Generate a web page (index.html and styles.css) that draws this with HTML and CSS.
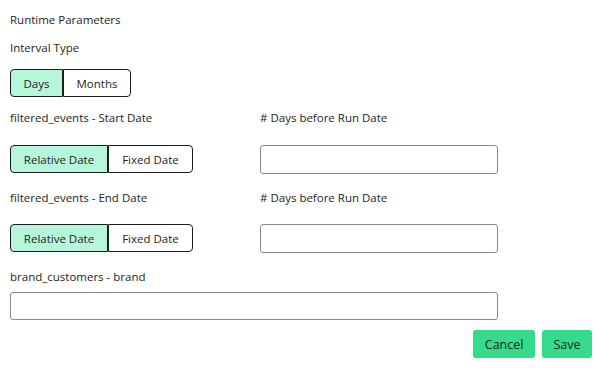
FILE: index.html
```html
<!DOCTYPE html>
<html lang="en">
<head>
    <meta charset="UTF-8">
    <title>Runtime Parameters</title>
    <link rel="stylesheet" href="styles.css">
</head>
<body>
    <div class="params">
        <div class="title">Runtime Parameters</div>

        <div class="field interval">
            <div class="label">Interval Type</div>
            <div class="toggle">
                <button class="active">Days</button>
                <button>Months</button>
            </div>
        </div>

        <div class="row start-row">
            <div class="field">
                <div class="label">filtered_events - Start Date</div>
                <div class="toggle date-toggle">
                    <button class="active wide">Relative Date</button>
                    <button>Fixed Date</button>
                </div>
            </div>
            <div class="field">
                <div class="label">#&nbsp;Days before Run Date</div>
                <input class="text-input" type="text">
            </div>
        </div>

        <div class="row end-row">
            <div class="field">
                <div class="label">filtered_events - End Date</div>
                <div class="toggle date-toggle">
                    <button class="active wide">Relative Date</button>
                    <button>Fixed Date</button>
                </div>
            </div>
            <div class="field">
                <div class="label">#&nbsp;Days before Run Date</div>
                <input class="text-input" type="text">
            </div>
        </div>

        <div class="field brand">
            <div class="label">brand_customers - brand</div>
            <input class="text-input full" type="text">
        </div>

        <!-- Footer actions -->
        <div class="actions">
            <button class="btn">Cancel</button>
            <button class="btn">Save</button>
        </div>
    </div>
</body>
</html>
```

FILE: styles.css
```css
:root {
    --text: #1e1e1e;
    --toggle-border: #1c1c1c;
    --toggle-active: #b6f6da;
    --input-border: #8a8a8a;
    --btn-bg: #33db8a;
    --btn-text: #1b2b26;
    --font-family: 'Open Sans', 'Noto Sans', sans-serif;
}

* {
    box-sizing: border-box;
    margin: 0;
    padding: 0;
}

body {
    font-family: var(--font-family);
    font-size: 11.5px;
    color: var(--text);
    background: #ffffff;
}

.params {
    padding: 12px 17px 0 10px;
}

.title,
.label {
    line-height: 16px;
}

/* Interval type */
.interval {
    margin-top: 12px;
}

.interval .label {
    margin-bottom: 13px;
}

/* Segmented toggle */
.toggle {
    display: flex;
}

.toggle button {
    font-family: var(--font-family);
    font-size: 11.5px;
    color: var(--text);
    background: #ffffff;
    border: 1px solid var(--toggle-border);
    height: 28px;
    padding: 0 12.5px;
    cursor: pointer;
}

.toggle button:first-child {
    border-radius: 4px 0 0 4px;
}

.toggle button:last-child {
    border-radius: 0 4px 4px 0;
}

.toggle button.active {
    background: var(--toggle-active);
}

.date-toggle button {
    width: 85px;
    padding: 0;
}

.date-toggle button.wide {
    width: 98px;
}

/* Two column rows */
.row {
    display: grid;
    grid-template-columns: 250px 238px;
}

.start-row {
    margin-top: 13px;
}

.start-row .label {
    margin-bottom: 19px;
}

.end-row {
    margin-top: 16px;
}

.end-row .label {
    margin-bottom: 18px;
}

.text-input {
    display: block;
    width: 238px;
    height: 29px;
    border: 1px solid var(--input-border);
    border-radius: 3px;
    font-family: var(--font-family);
    font-size: 11.5px;
    padding: 0 8px;
    outline: none;
}

.text-input.full {
    width: 488px;
    height: 28px;
}

/* Brand field */
.brand {
    margin-top: 16px;
}

.brand .label {
    margin-bottom: 7px;
}

/* Actions */
.actions {
    display: flex;
    justify-content: flex-end;
    gap: 7px;
    margin-top: 10px;
}

.btn {
    font-family: var(--font-family);
    font-size: 12.5px;
    color: var(--btn-text);
    background: var(--btn-bg);
    border: none;
    border-radius: 3px;
    height: 28px;
    padding: 0 11.5px;
    cursor: pointer;
}
```
